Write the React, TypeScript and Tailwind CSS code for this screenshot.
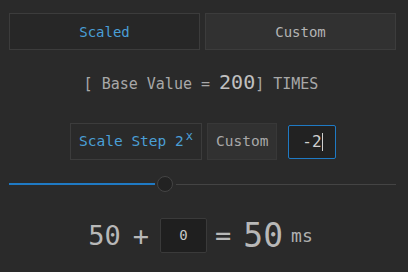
import { useState } from 'react';

export default function App() {
  const [mode, setMode] = useState<'scaled' | 'custom'>('scaled');
  const pct = 40;

  return (
    <div className="w-[408px] h-[272px] bg-[#2a2a2a] text-[#b4b4b4] font-['DejaVu_Sans_Mono',monospace] flex flex-col px-[9px] pt-[13px]">
      {/* Mode tabs */}
      <div className="flex gap-[5px]">
        <button
          onClick={() => setMode('scaled')}
          className={`h-[37px] w-[191px] pt-[1px] border border-[#3c3c3c] text-[14px] ${mode === 'scaled' ? 'bg-[#272727] text-[#4a9fd6]' : 'bg-[#313131]'}`}
        >
          Scaled
        </button>
        <button
          onClick={() => setMode('custom')}
          className={`h-[37px] w-[191px] pt-[1px] border border-[#3c3c3c] text-[14px] ${mode === 'custom' ? 'bg-[#272727] text-[#4a9fd6]' : 'bg-[#313131] text-[#b4b4b4]'}`}
        >
          Custom
        </button>
      </div>

      {/* Base value */}
      <div className="mt-[20px] h-[24px] flex items-end justify-center pr-[6px] text-[15px] text-[#a8a8a8] whitespace-pre">
        <span className="leading-[20px]">[ Base Value = </span>
        <span className="text-[20px] leading-[24px] text-[#c0c0c0]">200</span>
        <span className="leading-[20px]">] TIMES</span>
      </div>

      {/* Step row */}
      <div className="mt-[29px] flex items-center pl-[61px] gap-[5px]">
        <div className="h-[37px] px-[8px] flex items-center border border-[#3c3c3c] bg-[#2a2a2a] text-[14.5px] text-[#4a9fd6]">
          Scale Step 2<sup className="text-[12px] -top-[6px] ml-[2px]">x</sup>
        </div>
        <div className="h-[37px] px-[8px] flex items-center border border-[#383838] bg-[#313131] text-[14.5px] text-[#a8a8a8]">
          Custom
        </div>
        <div className="ml-[6px] h-[34px] w-[48px] rounded-[2px] border border-[#1f7ac4] bg-[#222222] flex items-center justify-center text-[16px] text-[#d0d0d0]">
          -2<span className="w-px h-[18px] bg-[#d0d0d0]" />
        </div>
      </div>

      {/* Slider */}
      <div className="mt-[16px] relative h-[16px] flex items-center">
        <div className="h-[2px] bg-[#1f7ac4]" style={{ width: `${pct * 146 / 40}px` }} />
        <div className="w-[16px] h-[16px] rounded-full border border-[#444] bg-[#222] ml-[2px]" />
        <div className="flex-1 h-px bg-[#444] ml-[3px] mr-[3px]" />
      </div>

      {/* Result */}
      <div className="mt-[19px] flex items-center justify-center pr-[7px]">
        <span className="text-[27px] text-[#b8b8b8]">50</span>
        <span className="text-[27px] text-[#b8b8b8] ml-[12px]">+</span>
        <div className="ml-[11px] w-[47px] h-[35px] border border-[#3a3a3a] rounded-[2px] bg-[#1f1f1f] flex items-center justify-center text-[14px] text-[#c8c8c8]">
          0
        </div>
        <span className="text-[27px] text-[#b8b8b8] ml-[8px]">=</span>
        <span className="text-[33px] text-[#b8b8b8] ml-[12px]">50</span>
        <span className="text-[18px] text-[#b0b0b0] ml-[8px]">ms</span>
      </div>
    </div>
  );
}
